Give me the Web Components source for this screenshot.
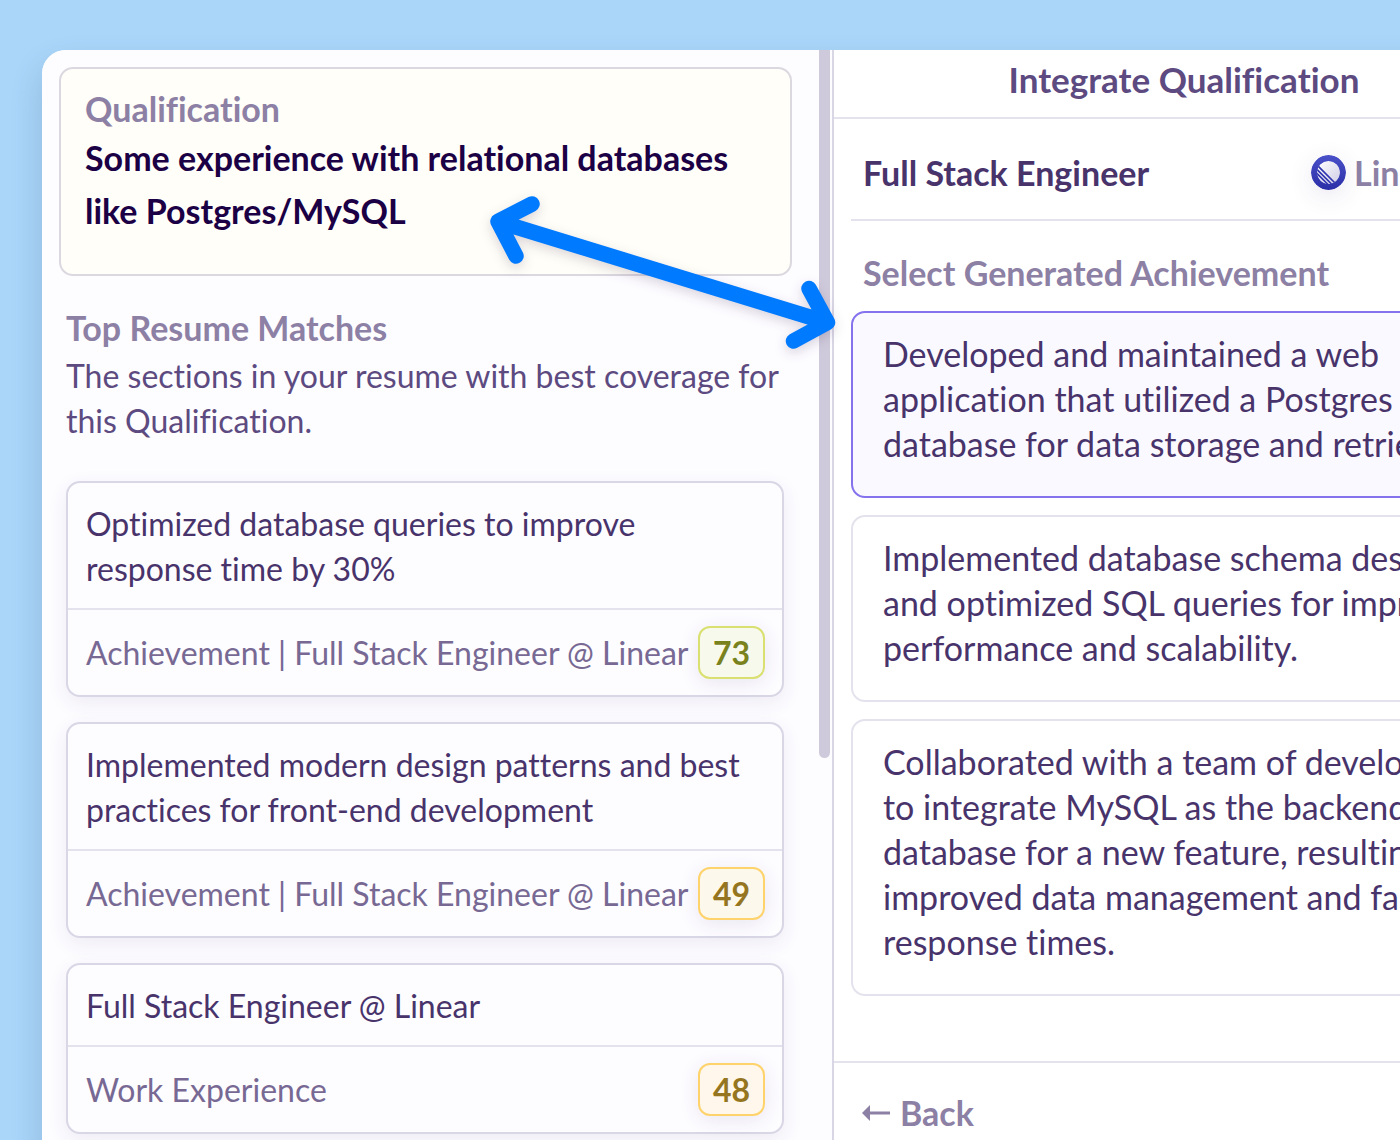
<!DOCTYPE html>
<html lang="en">
<head>
<meta charset="utf-8">
<title>Integrate Qualification</title>
<style>
  html, body { margin: 0; height: 100%; overflow: hidden; }
  body {
    background: #a9d6f9;
    font-family: Lato, "Liberation Sans", sans-serif;
    font-size: 34px;
    line-height: 45px;
    font-variant-ligatures: none;
    color: #48336b;
    --ink: #48336b;
    --ink-deep: #1b0045;
    --ink-soft: #5c4a80;
    --muted: #8d80a5;
    --line: #e4e2ec;
    --card-line: #d9d6e5;
  }
</style>
</head>
<body>
<app-window>
  <match-panel slot="left">
    <qualification-card>Some experience with relational databases like Postgres/MySQL</qualification-card>
    <match-list>
      <resume-match score="73" level="good">Optimized database queries to improve response time by 30%<span slot="source">Achievement | Full Stack Engineer @ Linear</span></resume-match>
      <resume-match score="49" level="fair">Implemented modern design patterns and best practices for front-end development<span slot="source">Achievement | Full Stack Engineer @ Linear</span></resume-match>
      <resume-match score="48" level="low">Full Stack Engineer @ Linear<span slot="source">Work Experience</span></resume-match>
    </match-list>
  </match-panel>
  <integrate-panel slot="right">
    <job-heading>Full Stack Engineer<span slot="company">Linear</span></job-heading>
    <achievement-picker></achievement-picker>
  </integrate-panel>
  <link-arrow slot="overlay"></link-arrow>
</app-window>

<script>
function define(name, html, setup) {
  const template = document.createElement('template');
  template.innerHTML = html;
  customElements.define(name, class extends HTMLElement {
    constructor() {
      super();
      this.attachShadow({ mode: 'open' }).append(template.content.cloneNode(true));
    }
    connectedCallback() { if (setup) setup(this, this.shadowRoot); }
  });
}
const base = '*{box-sizing:border-box}h1,h2,h3,p{margin:0;font:inherit}';

define('app-window', `
  <style>${base}
    :host { display: block; height: 100vh; box-sizing: border-box; padding: 50px 0 0 42px; overflow: hidden; }
    main {
      display: flex; width: max-content; min-height: 100%;
      border-radius: 24px 24px 0 0; background: #fff;
      box-shadow: 0 16px 32px rgba(50, 60, 110, .2);
    }
    slot[name=left]::slotted(*) { border-radius: 24px 0 0 0; }
  </style>
  <main><slot name="left"></slot><slot name="right"></slot></main>
  <slot name="overlay"></slot>`);

define('match-panel', `
  <style>${base}
    :host { display: flex; box-sizing: border-box; width: 792px; background: #fdfcff; border-right: 2px solid var(--card-line); font-size: 32px; }
    .content { flex: 1; min-width: 0; padding: 17px 27px 24px 17px; }
    .track { flex: none; width: 13px; }
    .thumb { width: 11px; height: 708px; background: #cfcadb; border-radius: 0 0 6px 6px; }
  </style>
  <div class="content"><slot></slot></div>
  <div class="track"><div class="thumb"></div></div>`);

define('qualification-card', `
  <style>${base}
    :host { display: block; box-sizing: border-box; padding: 17px 24px 37px; border: 2px solid #dcd8e0; border-radius: 14px; background: #fffef8; font-size: 34px; font-weight: 700; }
    h2 { color: var(--muted); }
    p { color: var(--ink-deep); line-height: 53px; }
  </style>
  <h2>Qualification</h2>
  <p><slot></slot></p>`);

define('match-list', `
  <style>${base}
    :host { display: block; padding: 28px 8px 0 7px; }
    h2 { padding-bottom: 2px; font-size: 34px; font-weight: 700; color: var(--muted); line-height: 47px; }
    p { color: var(--ink-soft); }
    .list { display: flex; flex-direction: column; gap: 25px; padding-top: 38px; }
  </style>
  <h2>Top Resume Matches</h2>
  <p>The sections in your resume with best coverage for this Qualification.</p>
  <div class="list"><slot></slot></div>`);

define('resume-match', `
  <style>${base}
    :host { display: block; box-sizing: border-box; border: 2px solid var(--card-line); border-radius: 14px; background: #fdfcff; box-shadow: 0 6px 20px rgba(70, 50, 120, .08); }
    .title { padding: 18px 18px 17px; border-bottom: 2px solid var(--line); color: var(--ink); }
    footer { display: flex; align-items: center; justify-content: space-between; padding: 16px 17px 16px 18px; color: #776993; white-space: nowrap; }
    .score { box-sizing: border-box; width: 67px; height: 53px; border: 2px solid; border-radius: 12px; font-weight: 700; line-height: 49px; text-align: center; box-shadow: 0 4px 20px rgba(70, 50, 120, .1); }
    .good { color: #7a821d; background: #f7f9ec; border-color: #dae06f; }
    .fair { color: #957520; background: #fcf8eb; border-color: #ffd36c; }
    .low { color: #957520; background: #fff7eb; border-color: #ffd36c; }
  </style>
  <div class="title"><slot></slot></div>
  <footer><slot name="source"></slot><span class="score"></span></footer>`,
  (host, root) => {
    const score = root.querySelector('.score');
    score.textContent = host.getAttribute('score');
    score.classList.add(host.getAttribute('level'));
  });

define('integrate-panel', `
  <style>${base}
    :host { display: flex; flex-direction: column; width: 700px; }
    h1 { padding: 7px 0 15px; border-bottom: 2px solid var(--line); font-size: 35px; font-weight: 700; text-align: center; color: var(--ink-soft); }
    .content { padding: 0 17px 65px; }
    footer { flex: 1; padding: 27px 28px 0; border-top: 2px solid var(--line); }
    button { display: flex; align-items: center; gap: 10px; padding: 0; border: 0; background: none; font: inherit; font-size: 34px; font-weight: 700; color: var(--muted); }
  </style>
  <h1>Integrate Qualification</h1>
  <div class="content"><slot></slot></div>
  <footer><button type="button">
    <svg width="28" height="16" viewBox="0 0 28 16" aria-hidden="true"><path d="M0 8L8 0V6.500H28V9.500H8V16Z" fill="currentColor"/></svg>Back
  </button></footer>`);

define('job-heading', `
  <style>${base}
    :host { display: flex; align-items: center; justify-content: space-between; padding: 31px 12px 24px; border-bottom: 2px solid var(--line); font-size: 34px; font-weight: 700; }
    .company { display: flex; align-items: center; gap: 8px; width: 194px; color: var(--muted); }
    svg { border-radius: 50%; box-shadow: 0 6px 24px rgba(70, 50, 120, .12); }
  </style>
  <h2><slot></slot></h2>
  <div class="company">
    <svg width="35" height="35" viewBox="0 0 35 35" aria-hidden="true">
      <defs>
        <linearGradient id="disc" x1="0" y1="0" x2="0" y2="1"><stop offset="0" stop-color="#4a50c8"/><stop offset="1" stop-color="#2a2fa8"/></linearGradient>
        <linearGradient id="moon" x1="0" y1="0" x2="1" y2="1"><stop offset="0" stop-color="#fff"/><stop offset="1" stop-color="#cfcde6"/></linearGradient>
        <clipPath id="round"><circle cx="17.500" cy="17.500" r="11.500"/></clipPath>
      </defs>
      <circle cx="17.500" cy="17.500" r="17.500" fill="url(#disc)"/>
      <g clip-path="url(#round)">
        <circle cx="17.500" cy="17.500" r="11.500" fill="url(#moon)"/>
        <path d="M5 9L25 29M3 11.500L23 31.500M0 12.500L20 32.500" stroke="#3136b0" stroke-width="1.600"/>
      </g>
    </svg>
    <slot name="company"></slot>
  </div>`);

define('achievement-picker', `
  <style>${base}
    :host { display: block; }
    fieldset { display: flex; flex-direction: column; gap: 17px; min-width: 0; margin: 0; padding: 0; border: 0; }
    legend { padding: 29px 12px 16px; font-size: 34px; font-weight: 700; color: var(--muted); }
    label { display: block; padding: 18px 30px 30px; border: 2px solid var(--line); border-radius: 14px; }
    label:has(:checked) { border-color: #8573ee; background: #faf9ff; }
    input { appearance: none; position: absolute; width: 1px; height: 1px; margin: 0; }
  </style>
  <fieldset>
    <legend>Select Generated Achievement</legend>
    <label><input type="radio" name="achievement" checked>Developed and maintained a web application that utilized a Postgres database for data storage and retrieval.</label>
    <label><input type="radio" name="achievement">Implemented database schema design and optimized SQL queries for improved performance and scalability.</label>
    <label><input type="radio" name="achievement">Collaborated with a team of developers to integrate MySQL as the backend database for a new feature, resulting in improved data management and faster response times.</label>
  </fieldset>`);

define('link-arrow', `
  <style>
    :host { position: absolute; left: 480px; top: 186px; pointer-events: none; }
    svg { display: block; overflow: visible; filter: drop-shadow(0 4px 6px rgba(50, 30, 80, .18)); }
  </style>
  <svg width="366" height="174" viewBox="480 186 366 174" fill="none" stroke="#007aff" stroke-width="15.500" stroke-linecap="round" stroke-linejoin="round" aria-hidden="true">
    <path d="M498 221.500L827.500 322.500M532 204L498 221.500L516 256M809 288.500L827.500 322.500L793.500 341"/>
  </svg>`);
</script>
</body>
</html>
